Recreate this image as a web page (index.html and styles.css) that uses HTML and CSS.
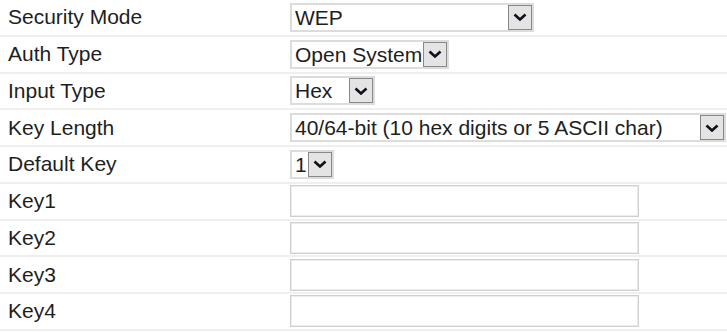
FILE: index.html
```html
<!DOCTYPE html>
<html lang="en">
<head>
    <meta charset="UTF-8">
    <title>Wireless Security</title>
    <link rel="stylesheet" href="styles.css">
</head>
<body>
    <div class="settings">
        <div class="row">
            <div class="label">Security Mode</div>
            <div class="select w-mode"><span class="value">WEP</span><span class="arrow"><svg viewBox="0 0 14 8"><path d="M1.5 1.5 L7 6.5 L12.5 1.5"/></svg></span></div>
        </div>
        <div class="row">
            <div class="label">Auth Type</div>
            <div class="select w-auth"><span class="value">Open System</span><span class="arrow"><svg viewBox="0 0 14 8"><path d="M1.5 1.5 L7 6.5 L12.5 1.5"/></svg></span></div>
        </div>
        <div class="row">
            <div class="label">Input Type</div>
            <div class="select w-input"><span class="value">Hex</span><span class="arrow"><svg viewBox="0 0 14 8"><path d="M1.5 1.5 L7 6.5 L12.5 1.5"/></svg></span></div>
        </div>
        <div class="row">
            <div class="label">Key Length</div>
            <div class="select w-length"><span class="value">40/64-bit (10 hex digits or 5 ASCII char)</span><span class="arrow"><svg viewBox="0 0 14 8"><path d="M1.5 1.5 L7 6.5 L12.5 1.5"/></svg></span></div>
        </div>
        <div class="row">
            <div class="label">Default Key</div>
            <div class="select w-default"><span class="value">1</span><span class="arrow"><svg viewBox="0 0 14 8"><path d="M1.5 1.5 L7 6.5 L12.5 1.5"/></svg></span></div>
        </div>
        <div class="row">
            <div class="label">Key1</div>
            <input type="text" class="key-input">
        </div>
        <div class="row">
            <div class="label">Key2</div>
            <input type="text" class="key-input">
        </div>
        <div class="row">
            <div class="label">Key3</div>
            <input type="text" class="key-input">
        </div>
        <div class="row">
            <div class="label">Key4</div>
            <input type="text" class="key-input">
        </div>
    </div>
</body>
</html>
```

FILE: styles.css
```css
body {
    margin: 0;
    font-family: "Liberation Sans", Arial, sans-serif;
    font-size: 21px;
    color: #1e1e1e;
    background-color: #fff;
}

.settings {
    width: 727px;
}

.row {
    display: flex;
    align-items: center;
    height: 34.75px;
    border-bottom: 2px solid #efefef;
}

.label {
    width: 282px;
    padding-left: 8px;
    flex-shrink: 0;
}

.select {
    display: flex;
    height: 29px;
    box-sizing: border-box;
    border: 2px solid #dcdcdc;
    background-color: #fff;
}

.select .value {
    flex: 1;
    padding-left: 3px;
    line-height: 25px;
    white-space: nowrap;
    overflow: hidden;
}

.select .arrow {
    width: 24px;
    box-sizing: border-box;
    border: 1px solid #888;
    background-color: #e4e4e4;
    display: flex;
    align-items: center;
    justify-content: center;
}

.select svg {
    width: 14px;
    height: 8px;
    fill: none;
    stroke: #10101c;
    stroke-width: 2.6;
}

.w-mode {
    width: 244px;
}

.w-auth {
    width: 159px;
}

.w-input {
    width: 85px;
}

.w-length {
    width: 436px;
}

.w-default {
    width: 44px;
}

.key-input {
    width: 349px;
    height: 32px;
    box-sizing: border-box;
    margin: 0;
    padding: 2px 4px;
    border: 1px solid #cfcfcf;
    box-shadow: inset 0 0 0 1px #ececec;
    font-family: inherit;
    font-size: 21px;
    outline: none;
}
```
